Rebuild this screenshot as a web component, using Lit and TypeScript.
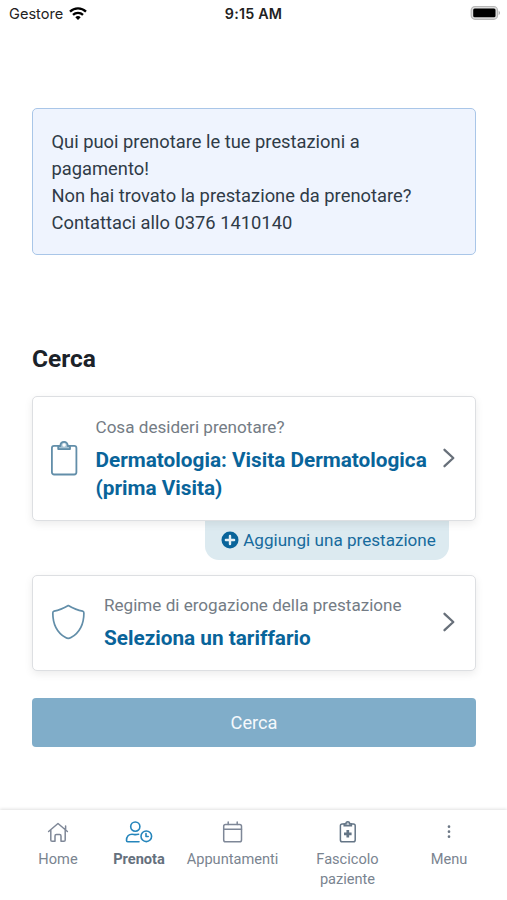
import { LitElement, html, css, svg } from "lit";
import { customElement, property } from "lit/decorators.js";

const clipboard = svg`<svg width="28" height="36" viewBox="0 0 28 36" fill="none" stroke="#628ea9" stroke-width="1.8">
  <rect x="1.900" y="5.900" width="24.500" height="28.600" rx="2.200"/>
  <path d="M8.200 6v3.100h11.800V6h-2.200c0-5.600-7.400-5.600-7.400 0z" fill="#a9c4d4" stroke-linejoin="round"/>
  <circle cx="14.100" cy="5" r="1.700" fill="#fff" stroke="none"/></svg>`;

const shield = svg`<svg width="36" height="38" viewBox="0 0 36 38" fill="none" stroke="#628ea9" stroke-width="1.7" stroke-linejoin="round">
  <path d="M18.300 2.600C13.600 5.400 8.800 7.400 4.100 8.100Q2.800 8.400 2.800 9.900C2.800 21 6.900 29.500 15.600 34.600Q18.300 36.200 21 34.600C29.700 29.500 33.900 21 33.900 9.900Q33.900 8.400 32.600 8.100C27.800 7.400 23 5.400 18.300 2.600Z"/></svg>`;

const chevron = svg`<svg width="14" height="20" viewBox="0 0 14 20" fill="none" stroke="#68707a" stroke-width="2.300" stroke-linecap="round" stroke-linejoin="round"><path d="M2.500 1.800 11.300 10 2.500 18.200"/></svg>`;

const navIcons = {
  home: svg`<svg width="22" height="24" viewBox="0 0 22 24" fill="none" stroke="#7e8797" stroke-width="1.500" stroke-linecap="round" stroke-linejoin="round">
    <path d="M1.600 11.500 11 3.500 20.400 11.500M3.800 10v9.900q0 1.300 1.300 1.300H8v-5.200Q8 14.600 9.400 14.600h3.200q1.400 0 1.400 1.400v5.200h2.900q1.300 0 1.300-1.300V10M18.600 9.500V6"/></svg>`,
  book: svg`<svg width="28" height="24" viewBox="0 0 28 24" fill="none" stroke="#2585bb" stroke-width="1.600" stroke-linecap="round" stroke-linejoin="round">
    <circle cx="10.300" cy="6.600" r="4.600"/><path d="M14 21.700H2.700q-1.200 0-1.200-1.200c0-4.200 2.300-6.300 5.500-6.300 1.500 0 2.200.4 3.300.4s1.800-.4 3.300-.4"/><circle cx="21.300" cy="16.300" r="5.300"/><path d="M21 13.500v3h2.200"/></svg>`,
  calendar: svg`<svg width="22" height="24" viewBox="0 0 22 24" fill="none" stroke="#7e8797" stroke-width="1.500" stroke-linecap="round">
    <rect x="1.700" y="4.400" width="17.800" height="17.300" rx="1.800"/><path d="M2 9.200h17.500M6.200 2v2.400M15.200 2v2.400"/></svg>`,
  record: svg`<svg width="18" height="24" viewBox="0 0 18 24" fill="none" stroke="#647586" stroke-width="1.500">
    <rect x="1.400" y="4" width="14.800" height="17.800" rx="1.800"/><path d="M5.200 4v1.700h7.200V4h-1.700c0-2.900-3.800-2.900-3.800 0z" fill="#c4ccd4"/><path d="M8.800 10v7.600M5 13.800h7.600" stroke-width="2.700"/></svg>`,
  menu: svg`<svg width="22" height="24" viewBox="0 0 22 24" fill="#6c7785"><circle cx="11" cy="6.700" r="1.350"/><circle cx="11" cy="11.700" r="1.350"/><circle cx="11" cy="16.700" r="1.350"/></svg>`,
};

@customElement("status-bar")
class StatusBar extends LitElement {
  static styles = css`
    :host { display: grid; grid-template-columns: 1fr auto 1fr; align-items: center; box-sizing: border-box; height: 28px; padding: 0 6px 2px 9px; font-family: Inter, sans-serif; color: #222; }
    .carrier { display: flex; align-items: center; gap: 6px; font-size: 14.600px; padding-top: 1px; }
    .time { font-size: 14.300px; font-weight: 600; letter-spacing: .2px; margin-right: 3px; }
    .battery { justify-self: end; }
    svg { display: block; }
  `;
  render() {
    return html`<div class="carrier"><span>Gestore</span>
        <svg width="18" height="14" viewBox="0 0 18 14" fill="none" stroke="#000" stroke-width="2.300"><path d="M1 4.700a11.500 11.500 0 0 1 16 0M4 7.900a7.200 7.200 0 0 1 10 0"/><path d="M9 12.900 6.300 10.200a4 4 0 0 1 5.400 0z" fill="#000" stroke="none"/></svg></div>
      <span class="time">9:15 AM</span>
      <svg class="battery" width="31" height="16" viewBox="0 0 31 16"><rect x="1.200" y="1.500" width="26.300" height="12.800" rx="3.800" fill="#ddd" stroke="#b8b8b8" stroke-width="1.200"/><rect x="3.200" y="3.600" width="22.300" height="8.700" rx="1.500"/><path d="M28.700 5.800q2.600 2.200 0 4.400z" fill="#aaa"/></svg>`;
  }
}

@customElement("choice-card")
class ChoiceCard extends LitElement {
  @property() label = "";
  @property() value = "";
  @property() icon: "clipboard" | "shield" = "clipboard";
  static styles = css`
    :host { display: flex; align-items: center; box-sizing: border-box; border: 1px solid #dddfe2; border-radius: 5px; background: #fff; box-shadow: 0 3px 9px rgba(0,0,0,.08); padding: 0 19px 2px 17px; position: relative; }
    .icon { display: flex; margin-right: 17.500px; }
    .shield { margin-right: 18px; }
    .body { flex: 1; min-width: 0; }
    .label { font-size: 17.100px; line-height: 26px; color: #747c85; white-space: nowrap; }
    .value { font-size: 20.750px; line-height: 28px; font-weight: 700; color: #09649a; margin-top: 6px; white-space: pre; }
    .chevron { display: flex; }
  `;
  render() {
    return html`<div class="icon ${this.icon}">${this.icon === "shield" ? shield : clipboard}</div>
      <div class="body"><div class="label">${this.label}</div><div class="value">${this.value}</div></div>
      <div class="chevron">${chevron}</div>`;
  }
}

@customElement("tab-bar")
class TabBar extends LitElement {
  static styles = css`
    :host { display: grid; grid-template-columns: 76px 86px 101px 129px 74px; box-sizing: border-box; height: 90px; padding: 10px 20px 0; box-shadow: 0 -1px 3px rgba(0,0,0,.12); background: #fff; }
    .tab { display: flex; flex-direction: column; align-items: center; gap: 6px; text-align: center; font-size: 14.600px; line-height: 19.500px; color: #7a8490; }
    .active { color: #65707d; font-weight: 700; }
    .text { white-space: pre; }
    svg { display: block; }
  `;
  render() {
    const tabs = [["home", "Home"], ["book", "Prenota"], ["calendar", "Appuntamenti"], ["record", "Fascicolo\npaziente"], ["menu", "Menu"]] as const;
    return tabs.map(([icon, text]) => html`<div class="tab ${icon === "book" ? "active" : ""}">${navIcons[icon]}<span class="text">${text}</span></div>`);
  }
}

@customElement("app-root")
class AppRoot extends LitElement {
  static styles = css`
    :host { display: flex; flex-direction: column; box-sizing: border-box; width: 507px; height: 900px; overflow: hidden; background: #fff; font-family: Roboto, sans-serif; }
    .main { flex: 1; display: flex; flex-direction: column; padding: 80px 31px 0 32px; }
    .notice { box-sizing: border-box; height: 147px; padding: 19px 18.500px 17px; border: 1.500px solid #a9c6e8; border-radius: 5px; background: #eff4fe; color: #2f3b47; font-size: 18.330px; line-height: 27px; white-space: pre; }
    .title { margin: 89px 0 0; height: 30px; line-height: 30px; font-size: 24.500px; font-weight: 700; color: #1b2229; }
    .service { margin-top: 22px; height: 125px; }
    .add { align-self: flex-end; box-sizing: border-box; display: flex; align-items: center; justify-content: center; gap: 4px; width: 244px; height: 39px; padding: 0 0 2px 3px; margin-right: 27px; border-radius: 0 0 14px 14px; background: #dceaf0; color: #176a9d; font-size: 17.100px; white-space: nowrap; }
    .rate { margin-top: 15px; height: 96px; }
    .search { margin-top: 27px; height: 49px; border: 0; border-radius: 4px; background: #80adc9; color: #f5f9fc; font: 18.200px Roboto, sans-serif; }
  `;
  render() {
    return html`<status-bar></status-bar>
      <div class="main">
        <div class="notice">Qui puoi prenotare le tue prestazioni a
pagamento!
Non hai trovato la prestazione da prenotare?
Contattaci allo 0376 1410140</div>
        <h1 class="title">Cerca</h1>
        <choice-card class="service" icon="clipboard" label="Cosa desideri prenotare?" .value=${"Dermatologia: Visita Dermatologica\n(prima Visita)"}></choice-card>
        <div class="add"><svg width="18" height="18" viewBox="0 0 18 18"><circle cx="9" cy="9" r="8.500" fill="#09649a"/><path d="M9 4.900v8.200M4.900 9h8.200" stroke="#e5f0f5" stroke-width="2.400" stroke-linecap="round"/></svg><span>Aggiungi una prestazione</span></div>
        <choice-card class="rate" icon="shield" label="Regime di erogazione della prestazione" value="Seleziona un tariffario"></choice-card>
        <button class="search">Cerca</button>
      </div>
      <tab-bar></tab-bar>`;
  }
}
